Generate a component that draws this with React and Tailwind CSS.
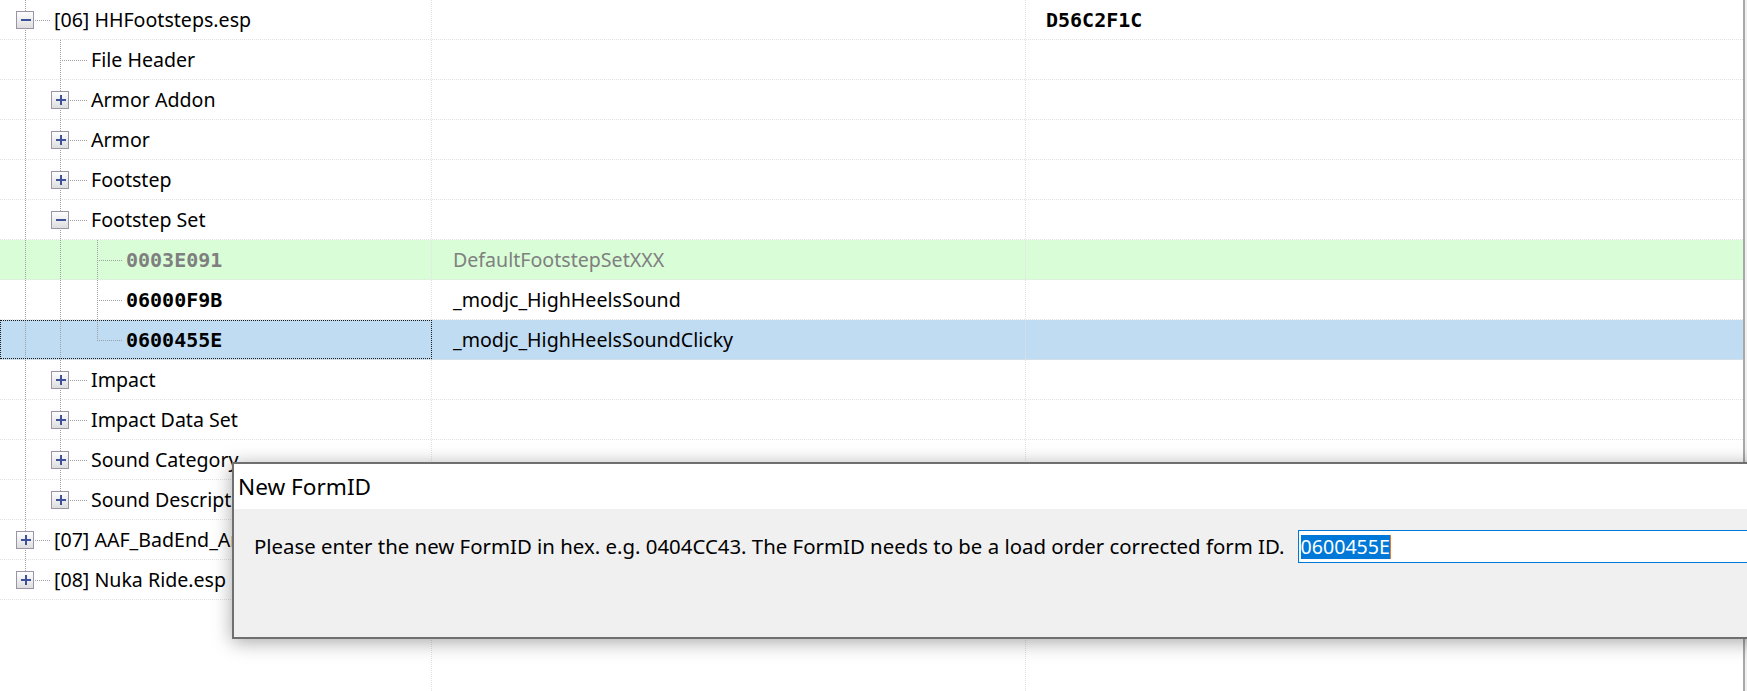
import React from 'react'

const LINE_X = [25, 60, 97]
const TEXT_X = [54, 91, 126]

const rows = [
    { level: 0, box: 'minus', label: '[06] HHFootsteps.esp', guides: [], last: false, sig: 'D56C2F1C' },
    { level: 1, label: 'File Header', guides: [25], last: false },
    { level: 1, box: 'plus', label: 'Armor Addon', guides: [25], last: false },
    { level: 1, box: 'plus', label: 'Armor', guides: [25], last: false },
    { level: 1, box: 'plus', label: 'Footstep', guides: [25], last: false },
    { level: 1, box: 'minus', label: 'Footstep Set', guides: [25], last: false },
    { level: 2, label: '0003E091', mono: true, muted: true, guides: [25, 60], last: false, name: 'DefaultFootstepSetXXX', tone: 'green' },
    { level: 2, label: '06000F9B', mono: true, guides: [25, 60], last: false, name: '_modjc_HighHeelsSound' },
    { level: 2, label: '0600455E', mono: true, guides: [25, 60], last: true, name: '_modjc_HighHeelsSoundClicky', tone: 'selected' },
    { level: 1, box: 'plus', label: 'Impact', guides: [25], last: false },
    { level: 1, box: 'plus', label: 'Impact Data Set', guides: [25], last: false },
    { level: 1, box: 'plus', label: 'Sound Category', guides: [25], last: false },
    { level: 1, box: 'plus', label: 'Sound Descriptor', guides: [25], last: true },
    { level: 0, box: 'plus', label: '[07] AAF_BadEnd_Animations.esp', guides: [], last: false },
    { level: 0, box: 'plus', label: '[08] Nuka Ride.esp', guides: [], last: true },
]

const Connector = ({ row, idx }) => {
    const x = LINE_X[row.level]
    const w = TEXT_X[row.level]
    const dot = { stroke: '#a0a0a0', strokeWidth: 1, strokeDasharray: '1 1', shapeRendering: 'crispEdges' }
    const gid = `expander-grad-${idx}`
    return (
        <svg width={w} height={39} className="shrink-0 overflow-visible">
            {row.guides.map((g) => (
                <line key={g} x1={g + 0.5} y1={0} x2={g + 0.5} y2={40} {...dot} />
            ))}
            <line x1={x + 0.5} y1={0} x2={x + 0.5} y2={row.last ? 20 : 40} {...dot} />
            <line x1={x} y1={20.5} x2={w - 4} y2={20.5} {...dot} />
            {row.box && (
                <g shapeRendering="crispEdges">
                    <defs>
                        <linearGradient id={gid} x1="0" y1="0" x2="0" y2="1">
                            <stop offset="0" stopColor="#ffffff" />
                            <stop offset="1" stopColor="#dcdcdc" />
                        </linearGradient>
                    </defs>
                    <rect x={x - 8.5} y={11.5} width={17} height={17} fill={`url(#${gid})`} stroke="#9a94a6" />
                    <rect x={x - 4} y={19} width={10} height={2} fill="#3d519b" />
                    {row.box === 'plus' && <rect x={x} y={15} width={2} height={10} fill="#3d519b" />}
                </g>
            )}
        </svg>
    )
}

const TreeRow = ({ row, idx }) => {
    const bg = row.tone === 'green' ? 'bg-[#d9fdd7]' : row.tone === 'selected' ? 'bg-[#c0dcf3]' : 'bg-white'
    const selected = row.tone === 'selected'
    return (
        <div className={`flex h-[40px] border-b border-dotted border-[#e2e2e2] ${bg}`}>
            <div className={`flex items-center w-[432px] shrink-0 overflow-hidden ${selected ? 'outline-1 outline-dotted outline-[#1a1a1a] -outline-offset-1' : 'border-r border-dotted border-[#e2e2e2]'}`}>
                <Connector row={row} idx={idx} />
                {row.mono ? (
                    <span className={`font-['DejaVu_Sans_Mono',monospace] font-bold text-[20px] ${row.muted ? 'text-[#7f7f7f]' : 'text-black'}`}>{row.label}</span>
                ) : (
                    <span className="whitespace-nowrap text-[19.6px] text-black">{row.label}</span>
                )}
            </div>
            <div className="flex items-center w-[594px] shrink-0 pl-[21px] border-r border-dotted border-[#e2e2e2]">
                {row.name && (
                    <span className={`text-[19.6px] ${row.muted ? 'text-[#808080]' : 'text-black'}`}>{row.name}</span>
                )}
            </div>
            <div className="flex items-center flex-1 pl-[20px]">
                {row.sig && (
                    <span className="font-['DejaVu_Sans_Mono',monospace] font-bold text-[20px] text-black">{row.sig}</span>
                )}
            </div>
        </div>
    )
}

const FormIdDialog = () => {
    return (
        <div className="absolute left-[232px] top-[462px] w-[1600px] border-2 border-[#6f6f6f] shadow-[0_3px_18px_rgba(0,0,0,0.35)]">
            <div className="h-[45px] bg-white flex items-center pl-[4px] text-[22.6px] text-black">New FormID</div>
            <div className="h-[128px] bg-[#f0f0f0] flex items-start pt-[21px] pl-[20px] gap-[13px]">
                <span className="h-[33px] flex items-center whitespace-nowrap text-[20.4px] text-black">
                    Please enter the new FormID in hex. e.g. 0404CC43. The FormID needs to be a load order corrected form ID.
                </span>
                <div className="h-[33px] w-[700px] border border-[#0078d7] bg-white flex items-center pl-[2px]">
                    <span className="h-[24px] flex items-center bg-[#0078d7] text-white text-[19.6px] border-r border-[#e87a2a]">0600455E</span>
                </div>
            </div>
        </div>
    )
}

export default function App() {
    return (
        <div className="relative flex w-[1747px] h-[691px] overflow-hidden bg-[#f0f0f0] font-['Noto_Sans',sans-serif]">
            <div className="flex flex-col w-[1743px] shrink-0 bg-white">
                {rows.map((row, i) => <TreeRow key={row.label} row={row} idx={i} />)}
                <div className="flex flex-1">
                    <div className="w-[432px] shrink-0 border-r border-dotted border-[#e2e2e2]" />
                    <div className="w-[594px] shrink-0 border-r border-dotted border-[#e2e2e2]" />
                    <div className="flex-1" />
                </div>
            </div>
            <div className="w-[2px] shrink-0 bg-[#a8a8a8]" />
            <FormIdDialog />
        </div>
    )
}
